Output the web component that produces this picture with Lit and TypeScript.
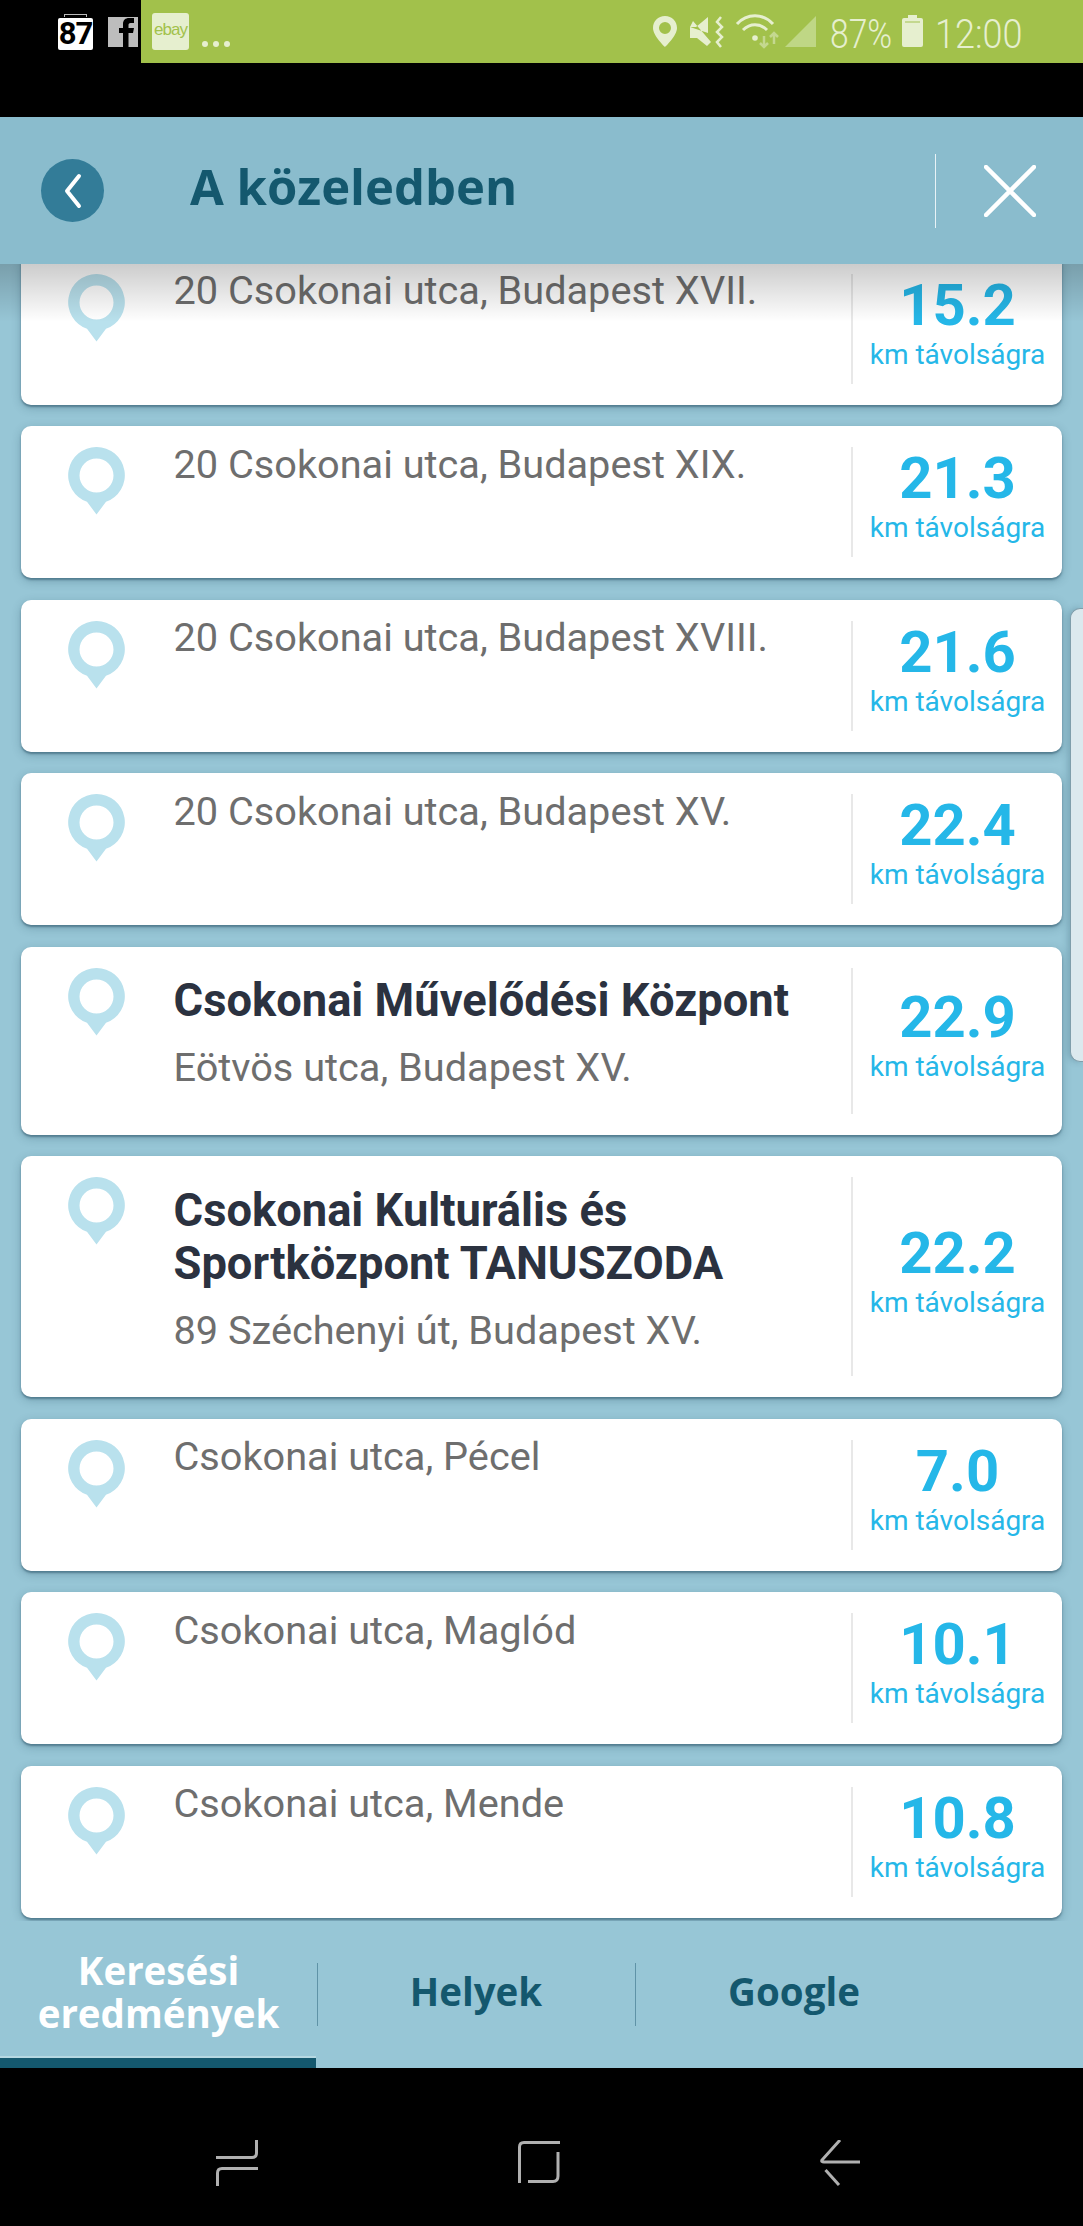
import { LitElement, html, css, svg } from "lit";
import { customElement } from "lit/decorators.js";

interface Item { title?: string[]; sub: string; dist: string; h: number; }

const items: Item[] = [
  { sub: "20 Csokonai utca, Budapest XVII.", dist: "15.2", h: 152 },
  { sub: "20 Csokonai utca, Budapest XIX.", dist: "21.3", h: 152 },
  { sub: "20 Csokonai utca, Budapest XVIII.", dist: "21.6", h: 152 },
  { sub: "20 Csokonai utca, Budapest XV.", dist: "22.4", h: 152 },
  { title: ["Csokonai Művelődési Központ"], sub: "Eötvös utca, Budapest XV.", dist: "22.9", h: 188 },
  { title: ["Csokonai Kulturális és", "Sportközpont TANUSZODA"], sub: "89 Széchenyi út, Budapest XV.", dist: "22.2", h: 241 },
  { sub: "Csokonai utca, Pécel", dist: "7.0", h: 152 },
  { sub: "Csokonai utca, Maglód", dist: "10.1", h: 152 },
  { sub: "Csokonai utca, Mende", dist: "10.8", h: 152 },
];

const pin = svg`<svg class="pin" width="57" height="68" viewBox="0 0 57 68"><path fill-rule="evenodd" fill="#b9e1ed" d="M28.500 0A28.200 28.200 0 0 0 19 54.800L28.500 67.500L38 54.800A28.200 28.200 0 0 0 28.500 0ZM28.500 11.500A17 17 0 1 1 28.500 45.500A17 17 0 1 1 28.500 11.500Z"/></svg>`;

@customElement("app-root")
export class AppRoot extends LitElement {
  static styles = css`
    :host { display: block; width: 1083px; height: 2226px; background: #000; overflow: hidden; font-family: Roboto, sans-serif; }
    .status { height: 63px; display: flex; align-items: stretch; background: #000; }
    .notif { width: 141px; flex: none; display: flex; box-sizing: border-box; padding: 14px 0 0 58px; gap: 15px; align-items: flex-start; }
    .n87 { width: 35px; height: 32px; margin-top: 4px; background: #fff; color: #000; border-radius: 2px; font: 700 31px/32px Roboto, sans-serif; text-align: center; position: relative; letter-spacing: -1px; }
    .n87::before { content: ""; position: absolute; left: 6px; right: 6px; top: -4px; height: 3px; border: 1px solid #bbb; border-bottom: 0; box-sizing: border-box; }
    .fb { display: block; margin-top: 3px; }
    .bar { flex: 1; background: #a2c14b; display: flex; align-items: flex-start; color: #e6efcf; }
    .ebay { width: 37px; height: 37px; margin: 13px 0 0 11px; background: #e6efcf; border-radius: 3px; color: #a2c14b; font: 400 17px/34px "Liberation Sans", sans-serif; text-align: center; letter-spacing: -1px; flex: none; }
    .dots { display: flex; gap: 5px; margin: 41px 0 0 13px; }
    .dots i { width: 6px; height: 6px; border-radius: 50%; background: #e6efcf; }
    .sys { margin-left: auto; display: flex; align-items: flex-start; margin-right: 65px; height: 63px; }
    .sys svg { display: block; flex: none; }
    .sys span { display: block; font: 300 40px/63px Roboto, sans-serif; padding-top: 3px; box-sizing: border-box; height: 63px; transform-origin: left top; white-space: nowrap; }
    .pct { width: 62px; margin-left: 14px; transform: scaleX(.84); }
    .batt { margin: 15px 12px 0 10px; }
    .time { width: 83px; transform: scaleX(.9); }
    .gap { height: 54px; background: #000; }
    .header { height: 147px; background: #8abccd; display: flex; align-items: center; position: relative; z-index: 2; }
    .back { width: 63px; height: 63px; margin-left: 41px; border-radius: 50%; background: #337c98; display: flex; align-items: center; justify-content: center; flex: none; }
    .htitle { margin-left: 86px; font: 700 49px/1 "Open Sans", Lato, sans-serif; color: #14586e; flex: 1; padding-bottom: 9px; }
    .hdiv { width: 1px; height: 74px; background: #e8f2f6; flex: none; }
    .close { width: 147px; display: flex; justify-content: center; flex: none; }
    .list { height: 1657px; background: #97c6d6; overflow: hidden; position: relative; }
    .list-in { display: flex; flex-direction: column; gap: 21.500px; padding: 0 21px; margin-top: -11.400px; }
    .card { background: #fff; border-radius: 10px; box-shadow: 0 2px 2px rgba(40,80,100,.5), 0 3px 10px rgba(30,70,90,.28); display: flex; flex: none; }
    .pinc { width: 75px; margin-left: 47px; padding-top: 21px; flex: none; }
    .pin { display: block; }
    .txt { flex: 1; margin-left: 30.500px; padding-top: 15.500px; min-width: 0; }
    .tbox { margin: 12px 0 18px; }
    .t { font: 700 45.300px/53px Roboto, sans-serif; color: #2b3240; white-space: nowrap; }
    .s { font: 400 39.700px/46px Roboto, sans-serif; color: #6e6e6e; white-space: nowrap; }
    .distc { width: 211px; flex: none; margin: 21px 0; border-left: 2px solid #e8e8e8; display: flex; flex-direction: column; align-items: center; justify-content: center; box-sizing: border-box; padding-bottom: 9px; }
    .d { font: 700 58px/56px Roboto, sans-serif; color: #25b7e8; }
    .k { font: 400 28px/34px Roboto, sans-serif; color: #25b7e8; margin-top: 5px; white-space: nowrap; }
    .fade { position: absolute; left: 0; right: 0; top: 0; height: 58px; background: linear-gradient(rgba(0,0,0,.2), rgba(0,0,0,0)); pointer-events: none; }
    .scroll { position: absolute; right: 0; top: 344px; width: 13px; height: 454px; box-sizing: border-box; background: #dce9ee; border: 1px solid #7f9eab; border-right: 0; border-radius: 10px 0 0 10px; box-shadow: -2px 0 6px rgba(30,70,90,.25); }
    .tabs { height: 147px; background: #97c6d6; display: flex; }
    .tab { width: 317px; height: 147px; flex: none; display: flex; align-items: center; justify-content: center; text-align: center; font: 700 38.500px/43px "Open Sans", Lato, sans-serif; color: #14586e; position: relative; box-sizing: border-box; padding-bottom: 6px; }
    .tab.wide { width: 318px; }
    .tab.on { color: #fff; }
    .tab.on::after { content: ""; position: absolute; left: 0; right: 1px; bottom: 0; height: 10px; background: #14586e; border-top: 2px solid #b6d8e2; }
    .tab + .tab::before { content: ""; position: absolute; left: 0; top: 42px; height: 63px; width: 1px; background: #5f93a7; }
    .nav { height: 158px; background: #000; display: flex; align-items: flex-start; box-sizing: border-box; padding: 72px 0 0 216px; gap: 260px; }
    .nav svg { display: block; flex: none; }
  `;

  render() {
    return html`
      <div class="status">
        <div class="notif">
          <div class="n87">87</div>
          <svg class="fb" width="30" height="30" viewBox="0 0 30 30"><rect width="30" height="30" fill="#bdbdbd"/><path fill="#000" d="M15 30V16H11V11H15V7C15 3 17.500 1 21 1H26V6H22.500C21 6 20.500 7 20.500 8V11H26L25 16H20.500V30Z"/></svg>
        </div>
        <div class="bar">
          <div class="ebay">ebay</div>
          <div class="dots"><i></i><i></i><i></i></div>
          <div class="sys">
            <svg width="163" height="63" viewBox="0 0 163 63" fill="#e6efcf">
              <path fill-rule="evenodd" d="M12 16C5 16 0 21 0 28C0 36 12 47 12 47S24 36 24 28C24 21 19 16 12 16ZM12 22A6 6 0 1 1 12 34A6 6 0 1 1 12 22Z"/>
              <path d="M37 27H43L55 17V33ZM37 27V38H44L54 46L58 42L40 21Z"/>
              <path d="M68 17l-4 5 5 5-5 5 5 5-5 5 4 5" fill="none" stroke="#e6efcf" stroke-width="2.500"/>
              <g fill="none" stroke="#e6efcf" stroke-width="3"><path d="M84 24C94 13 110 13 120 24"/><path d="M90 30C97 23 107 23 114 30"/></g>
              <circle cx="102" cy="38" r="2.800"/>
              <path d="M111 36V47M107 43l4 4l4-4" fill="none" stroke="#c4d88f" stroke-width="2.500"/>
              <path d="M121 44V33M117 37l4-4l4 4" fill="none" stroke="#c4d88f" stroke-width="2.500"/>
              <path d="M132 47L163 16V47Z" fill="#bfd785"/>
            </svg>
            <span class="pct">87%</span>
            <svg class="batt" width="21" height="32" viewBox="0 0 21 32" fill="#e6efcf"><path d="M6 0h9v3h4a2 2 0 0 1 2 2v25a2 2 0 0 1-2 2H2a2 2 0 0 1-2-2V5a2 2 0 0 1 2-2h4z"/><rect x="3" y="6" width="15" height="2" fill="#c4d88f"/></svg>
            <span class="time">12:00</span>
          </div>
        </div>
      </div>
      <div class="gap"></div>
      <div class="header">
        <div class="back"><svg width="20" height="36" viewBox="0 0 20 36" fill="none" stroke="#fff" stroke-width="4" stroke-linecap="round" stroke-linejoin="round"><path d="M16 3L4 18L16 33"/></svg></div>
        <div class="htitle">A közeledben</div>
        <div class="hdiv"></div>
        <div class="close"><svg width="52" height="52" viewBox="0 0 52 52" fill="none" stroke="#fff" stroke-width="4.500" stroke-linecap="round"><path d="M2 2L50 50M50 2L2 50"/></svg></div>
      </div>
      <div class="list">
        <div class="list-in">
          ${items.map((i) => this.card(i))}
        </div>
        <div class="fade"></div>
        <div class="scroll"></div>
      </div>
      <div class="tabs">
        <div class="tab on">Keresési<br />eredmények</div>
        <div class="tab wide">Helyek</div>
        <div class="tab wide">Google</div>
      </div>
      <div class="nav">
        <svg width="42" height="46" viewBox="0 0 42 46" fill="none" stroke="#b0b0b0" stroke-width="3"><path d="M40.500 0V13Q40.500 17.500 36 17.500H0"/><path d="M42 28.500H6Q1.500 28.500 1.500 33V46"/></svg>
        <svg width="42" height="44" viewBox="0 0 42 44" fill="none" stroke="#b0b0b0" stroke-width="3"><path d="M42 2.500H6Q1.500 2.500 1.500 7V43"/><path d="M40 12V36Q40 41.500 35 41.500H10"/></svg>
        <svg width="40" height="46" viewBox="0 0 40 46" fill="none" stroke="#b0b0b0" stroke-width="3"><path d="M20 0L2 20Q1 22 4 22H40"/><path d="M5.500 30L19 45"/></svg>
      </div>
    `;
  }

  card(i: Item) {
    return html`<div class="card" style="height:${i.h}px">
      <div class="pinc">${pin}</div>
      <div class="txt">
        ${i.title ? html`<div class="tbox">${i.title.map((t) => html`<div class="t">${t}</div>`)}</div>` : ""}
        <div class="s">${i.sub}</div>
      </div>
      <div class="distc"><div class="d">${i.dist}</div><div class="k">km távolságra</div></div>
    </div>`;
  }
}
